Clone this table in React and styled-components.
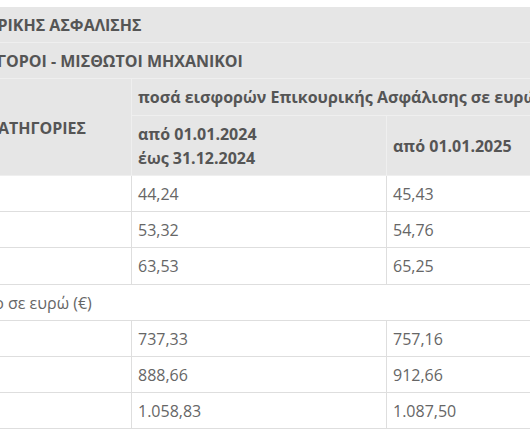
import React from "react";
import styled, { createGlobalStyle } from "styled-components";

const Global = createGlobalStyle`
  html, body { margin: 0; padding: 0; background: #fff; }
  body { font-family: "Open Sans", "Noto Sans", sans-serif; }
`;

const Viewport = styled.div`
  width: 530px;
  height: 445px;
  overflow: hidden;
  padding-top: 7px;
  box-sizing: border-box;
`;

const Table = styled.table`
  border-collapse: collapse;
  margin-left: -138px;
  width: 779px;
  table-layout: fixed;
  font-size: 16px;
  line-height: 24.2px;
`;

const Head = styled.th`
  background: #e6e6e6;
  color: #555;
  font-weight: 700;
  text-align: left;
  vertical-align: middle;
  white-space: nowrap;
  padding: 6px 6px 5px;
  border: 1px solid #efefef;
  border-top: none;
`;

const Cell = styled.td`
  color: #666;
  font-weight: 400;
  padding: 6px 6px 5px;
  white-space: nowrap;
  border-bottom: 1px solid #dedede;
  border-left: ${(p) => (p.$first ? "none" : "1px solid #dedede")};
`;

const header = {
  title: "ΚΛΑΔΟΣ ΕΠΙΚΟΥΡΙΚΗΣ ΑΣΦΑΛΙΣΗΣ",
  group: "ΤΕΧΝΙΚΟΙ - ΔΙΚΗΓΟΡΟΙ - ΜΙΣΘΩΤΟΙ ΜΗΧΑΝΙΚΟΙ",
  cats: "ΑΣΦΑΛΙΣΤΙΚΕΣ ΚΑΤΗΓΟΡΙΕΣ",
  amounts: "ποσά εισφορών Επικουρικής Ασφάλισης σε ευρώ (€)",
};

const monthly = [
  ["1η κατηγορία", "44,24", "45,43"],
  ["2η κατηγορία", "53,32", "54,76"],
  ["3η κατηγορία", "63,53", "65,25"],
];

const lump = [
  ["1η κατηγορία", "737,33", "757,16"],
  ["2η κατηγορία", "888,66", "912,66"],
  ["3η κατηγορία", "1.058,83", "1.087,50"],
];

function Rows({ rows }) {
  return rows.map(([label, a, b]) => (
    <tr key={label + a}>
      <Cell $first>{label}</Cell>
      <Cell>{a}</Cell>
      <Cell>{b}</Cell>
    </tr>
  ));
}

export default function App() {
  return (
    <>
      <Global />
      <Viewport>
        <Table>
          <colgroup>
            <col style={{ width: 269 }} />
            <col style={{ width: 255 }} />
            <col style={{ width: 255 }} />
          </colgroup>
          <thead>
            <tr>
              <Head colSpan={3}>{header.title}</Head>
            </tr>
            <tr>
              <Head colSpan={3}>{header.group}</Head>
            </tr>
            <tr>
              <Head rowSpan={2}>{header.cats}</Head>
              <Head colSpan={2}>{header.amounts}</Head>
            </tr>
            <tr>
              <Head>
                από 01.01.2024
                <br />
                έως 31.12.2024
              </Head>
              <Head>από 01.01.2025</Head>
            </tr>
          </thead>
          <tbody>
            <Rows rows={monthly} />
            <tr>
              <Cell $first colSpan={3}>
                Ποσό για εξάμηνο σε ευρώ (€)
              </Cell>
            </tr>
            <Rows rows={lump} />
          </tbody>
        </Table>
      </Viewport>
    </>
  );
}
